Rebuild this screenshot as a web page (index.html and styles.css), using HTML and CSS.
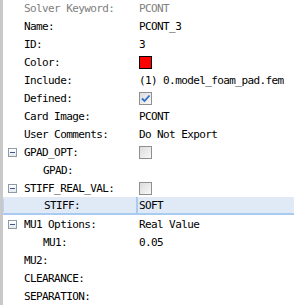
FILE: index.html
```html
<!DOCTYPE html>
<html lang="en">
<head>
    <meta charset="UTF-8">
    <title>Card Properties</title>
    <link rel="stylesheet" href="styles.css">
</head>
<body>
    <div class="panel">
        <div class="row">
            <div class="label muted">Solver Keyword:</div>
            <div class="value muted">PCONT</div>
        </div>
        <div class="row">
            <div class="label">Name:</div>
            <div class="value">PCONT_3</div>
        </div>
        <div class="row">
            <div class="label">ID:</div>
            <div class="value">3</div>
        </div>
        <div class="row">
            <div class="label">Color:</div>
            <div class="value"><span class="swatch"></span></div>
        </div>
        <div class="row">
            <div class="label">Include:</div>
            <div class="value">(1) 0.model_foam_pad.fem</div>
        </div>
        <div class="row">
            <div class="label">Defined:</div>
            <div class="value">
                <span class="check">
                    <svg width="11" height="11" viewBox="0 0 11 11"><path d="M2 5.5 L4.5 8 L9.5 2.5" fill="none" stroke="#2a6fc4" stroke-width="1.8"/></svg>
                </span>
            </div>
        </div>
        <div class="row">
            <div class="label">Card Image:</div>
            <div class="value">PCONT</div>
        </div>
        <div class="row">
            <div class="label">User Comments:</div>
            <div class="value">Do Not Export</div>
        </div>
        <div class="row">
            <div class="label group"><span class="tog"></span>GPAD_OPT:</div>
            <div class="value"><span class="check"></span></div>
        </div>
        <div class="row">
            <div class="label sub">GPAD:</div>
            <div class="value"></div>
        </div>
        <div class="row">
            <div class="label group"><span class="tog"></span>STIFF_REAL_VAL:</div>
            <div class="value"><span class="check"></span></div>
        </div>
        <div class="row selected">
            <div class="label sub">STIFF:</div>
            <div class="value">SOFT</div>
        </div>
        <div class="row">
            <div class="label group"><span class="tog"></span>MU1 Options:</div>
            <div class="value">Real Value</div>
        </div>
        <div class="row">
            <div class="label sub">MU1:</div>
            <div class="value">0.05</div>
        </div>
        <div class="row">
            <div class="label">MU2:</div>
            <div class="value"></div>
        </div>
        <div class="row">
            <div class="label">CLEARANCE:</div>
            <div class="value"></div>
        </div>
        <div class="row">
            <div class="label">SEPARATION:</div>
            <div class="value"></div>
        </div>
    </div>
</body>
</html>
```

FILE: styles.css
```css
body {
    margin: 0;
    background: #fff;
    color: #000;
    font-family: "DejaVu Sans Mono", monospace;
    font-size: 11px;
    letter-spacing: -0.6px;
    overflow: hidden;
}

.panel {
    border-left: 3px solid #c9c9c9;
    margin-top: -1px;
    height: 320px;
}

.row {
    display: flex;
    height: 18px;
    align-items: center;
    white-space: nowrap;
}

.label {
    width: 133px;
    padding-left: 21px;
    box-sizing: border-box;
    display: flex;
    align-items: center;
}

.label.group {
    padding-left: 5px;
}

.label.sub {
    padding-left: 40px;
}

.value {
    flex: 1;
    padding-left: 2px;
    border-left: 1px solid transparent;
    height: 100%;
    display: flex;
    align-items: center;
}

.muted {
    color: #808080;
}

.tog {
    width: 9px;
    height: 9px;
    box-sizing: border-box;
    border: 1px solid #8e9aa8;
    background: linear-gradient(#fff, #e4e8ee);
    margin-right: 7px;
    position: relative;
}

.tog::after {
    content: '';
    position: absolute;
    left: 1px;
    right: 1px;
    top: 3px;
    height: 1px;
    background: #3a5a8c;
}

.swatch {
    display: inline-block;
    width: 13px;
    height: 13px;
    box-sizing: border-box;
    background: #ff0000;
    border: 1px solid #000;
}

.check {
    display: inline-flex;
    align-items: center;
    justify-content: center;
    width: 13px;
    height: 13px;
    box-sizing: border-box;
    border: 1px solid #8f8f8f;
    background: linear-gradient(135deg, #dcdcdc, #f8f8f8);
}

.selected {
    background: #dfeaf6;
    border-bottom: 2px solid #a9cbf2;
    height: 16px;
}

.selected .label {
    border-left: 1px solid #bcd5f3;
}

.selected .value {
    border-left: 2px solid #a9cbf2;
    padding-left: 1px;
}
```
